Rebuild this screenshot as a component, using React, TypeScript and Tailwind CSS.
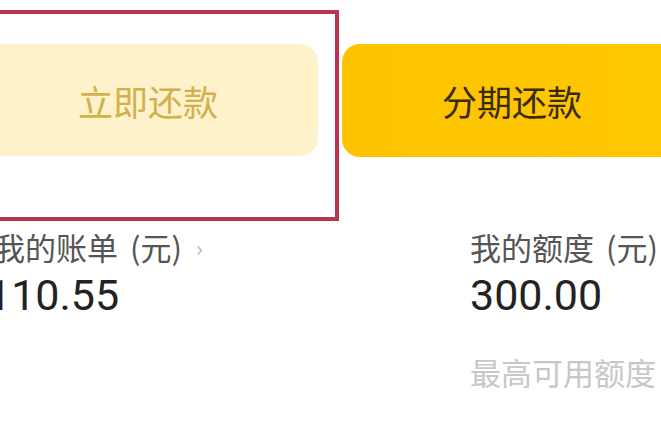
import React from 'react';

const cjk = "font-['Noto_Sans_CJK_SC','Noto_Sans',sans-serif]";
const num = "font-['Roboto','Liberation_Sans',sans-serif]";

export default function App() {
    return (
        <div className="relative w-[661px] h-[425px] overflow-hidden bg-white">
            {/* action buttons */}
            <div className="ml-[-22px] pt-[44px] grid grid-cols-[340px_340px] gap-x-[24px]">
                <button className={`h-[112px] rounded-[18px] bg-[#fdf2c9] text-[#d3b04c] text-[35px] leading-none ${cjk}`}>
                    立即还款
                </button>
                <button className={`h-[113px] rounded-[18px] bg-gradient-to-r from-[#fdc300] to-[#fec800] text-[#3a2a0c] text-[35px] leading-none ${cjk}`}>
                    分期还款
                </button>
            </div>

            {/* account summary */}
            <div className="mt-[72px] grid grid-cols-[470px_1fr]">
                <div className="ml-[-6px] flex flex-col">
                    <div className={`flex items-center text-[31px] leading-[36px] text-[#555555] whitespace-nowrap ${cjk}`}>
                        <span>我的账单</span>
                        <span className="ml-[12px]">(元)</span>
                        <span className="ml-[14px] text-[22px] text-[#b5b5b5]">›</span>
                    </div>
                    <div className={`ml-[-7px] mt-[6px] text-[43px] leading-[48px] font-normal text-[#222222] ${num}`}>
                        110.55
                    </div>
                </div>
                <div className="flex flex-col">
                    <div className={`flex text-[31px] leading-[36px] text-[#555555] whitespace-nowrap ${cjk}`}>
                        <span>我的额度</span>
                        <span className="ml-[12px]">(元)</span>
                    </div>
                    <div className={`mt-[6px] text-[43px] leading-[48px] font-normal text-[#222222] ${num}`}>
                        300.00
                    </div>
                    <div className={`mt-[35px] text-[31px] leading-[36px] text-[#c8c8c8] whitespace-nowrap ${cjk}`}>
                        最高可用额度
                    </div>
                </div>
            </div>

            {/* highlight frame */}
            <div className="absolute left-[-10px] top-[10px] w-[349px] h-[211px] border-[4px] border-[#b8354d]" />
        </div>
    );
}
